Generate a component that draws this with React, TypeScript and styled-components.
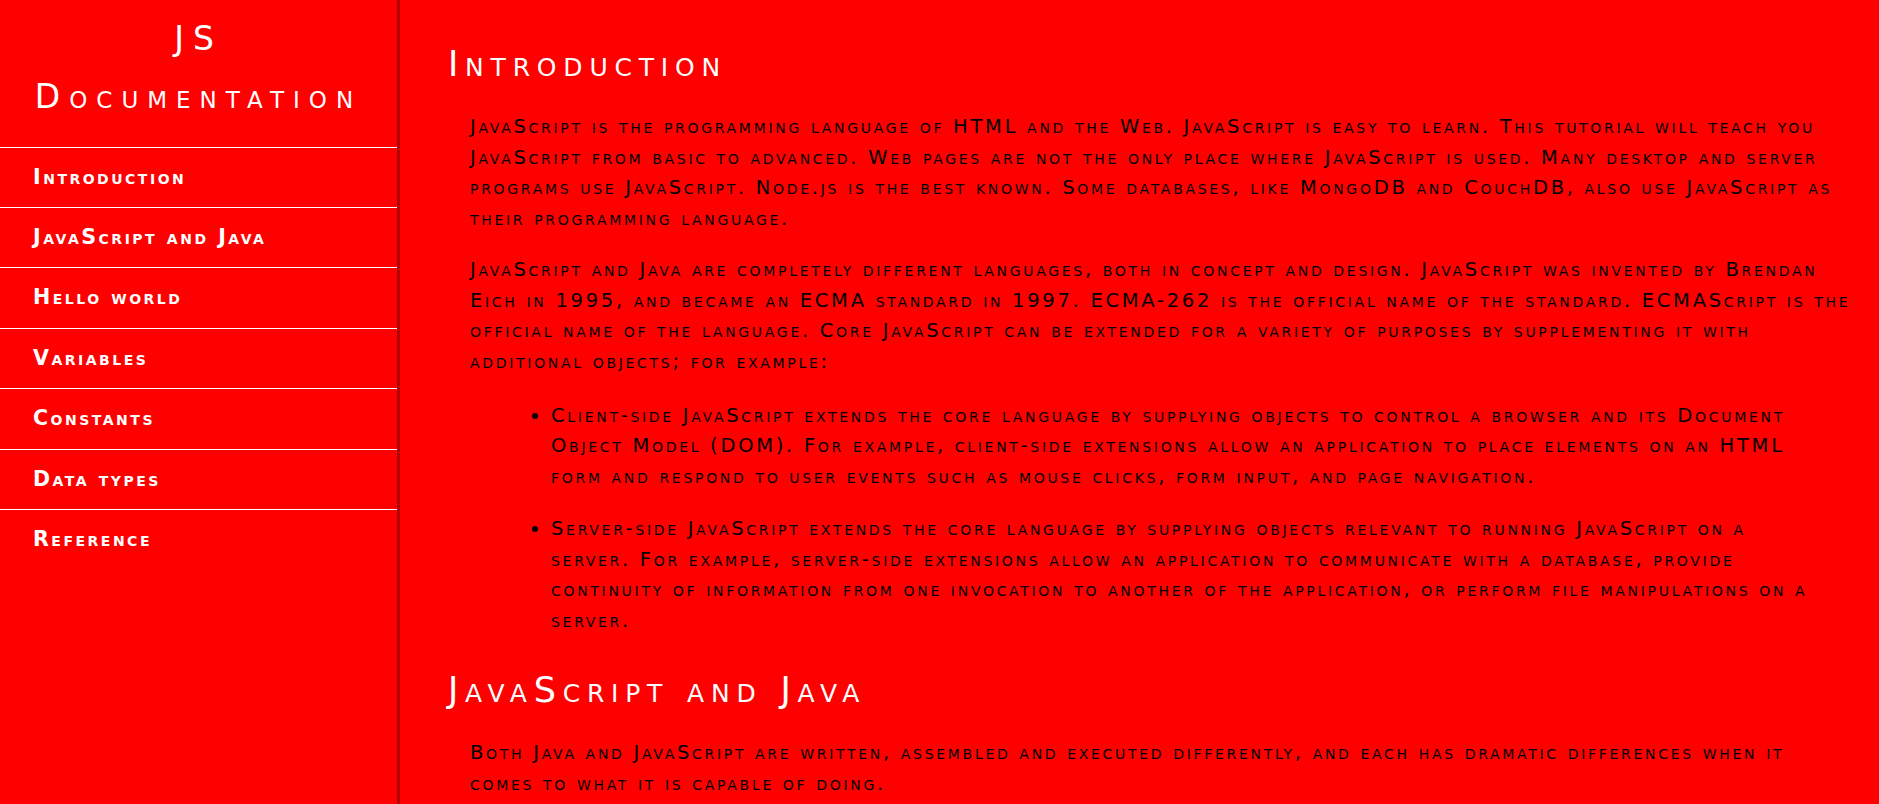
import React from "react";
import styled, { createGlobalStyle } from "styled-components";

const GlobalStyle = createGlobalStyle`
  * { box-sizing: border-box; }
  html, body {
    margin: 0;
    padding: 0;
    background: #ff0000;
  }
  body {
    font-family: "DejaVu Sans", "Liberation Sans", sans-serif;
    font-variant: small-caps;
    color: #000000;
  }
`;

const Page = styled.div`
  display: flex;
  min-height: 100vh;
  background: #ff0000;
`;

const Sidebar = styled.nav`
  flex: 0 0 400px;
  border-right: 3px solid #b30000;
  display: flex;
  flex-direction: column;
`;

const Title = styled.h1`
  margin: 0;
  height: 146.5px;
  padding: 10px 20px 0;
  text-align: center;
  color: #ffffff;
  font-size: 33px;
  font-weight: normal;
  line-height: 58px;
  letter-spacing: 9px;
`;

const NavList = styled.ul`
  list-style: none;
  margin: 0;
  padding: 0;
`;

const NavItem = styled.li`
  border-top: 1px solid #ffffff;
`;

const NavLink = styled.a`
  display: block;
  padding-left: 33px;
  color: #ffffff;
  text-decoration: none;
  font-size: 20.6px;
  font-weight: bold;
  line-height: 59.4px;
  letter-spacing: 2.5px;
`;

const Main = styled.main`
  flex: 1;
  min-width: 0;
  padding: 11px 26px 0 48px;
  display: flex;
  flex-direction: column;
`;

const Section = styled.section`
  display: flex;
  flex-direction: column;
  padding-top: 33px;
`;

const Heading = styled.header`
  margin: 0 0 28px;
  color: #ffffff;
  font-size: 35px;
  line-height: 40px;
  letter-spacing: 6.8px;
`;

const Paragraph = styled.p`
  margin: 0 0 20px 22px;
  font-size: 19.55px;
  line-height: 30.72px;
  letter-spacing: 2.7px;
`;

const List = styled.ul`
  margin: 3px 27px 0 22px;
  padding-left: 81px;
  font-size: 19.55px;
  line-height: 30.72px;
  letter-spacing: 2.7px;
`;

const ListItem = styled.li`
  & + & {
    margin-top: 21px;
  }
`;

type Topic = {
  id: string;
  title: string;
  paragraphs: string[];
  items?: string[];
};

const navTopics: { id: string; title: string }[] = [
  { id: "Introduction", title: "Introduction" },
  { id: "JavaScript_and_Java", title: "JavaScript and Java" },
  { id: "Hello_world", title: "Hello world" },
  { id: "Variables", title: "Variables" },
  { id: "Constants", title: "Constants" },
  { id: "Data_types", title: "Data types" },
  { id: "Reference", title: "Reference" },
];

const sections: Topic[] = [
  {
    id: "Introduction",
    title: "Introduction",
    paragraphs: [
      "JavaScript is the programming language of HTML and the Web. JavaScript is easy to learn. This tutorial will teach you JavaScript from basic to advanced. Web pages are not the only place where JavaScript is used. Many desktop and server programs use JavaScript. Node.js is the best known. Some databases, like MongoDB and CouchDB, also use JavaScript as their programming language.",
      "JavaScript and Java are completely different languages, both in concept and design. JavaScript was invented by Brendan Eich in 1995, and became an ECMA standard in 1997. ECMA-262 is the official name of the standard. ECMAScript is the official name of the language. Core JavaScript can be extended for a variety of purposes by supplementing it with additional objects; for example:",
    ],
    items: [
      "Client-side JavaScript extends the core language by supplying objects to control a browser and its Document Object Model (DOM). For example, client-side extensions allow an application to place elements on an HTML form and respond to user events such as mouse clicks, form input, and page navigation.",
      "Server-side JavaScript extends the core language by supplying objects relevant to running JavaScript on a server. For example, server-side extensions allow an application to communicate with a database, provide continuity of information from one invocation to another of the application, or perform file manipulations on a server.",
    ],
  },
  {
    id: "JavaScript_and_Java",
    title: "JavaScript and Java",
    paragraphs: [
      "Both Java and JavaScript are written, assembled and executed differently, and each has dramatic differences when it comes to what it is capable of doing.",
    ],
  },
];

export default function App() {
  return (
    <>
      <GlobalStyle />
      <Page>
        <Sidebar id="navbar">
          <Title>JS Documentation</Title>
          <NavList>
            {navTopics.map((t) => (
              <NavItem key={t.id}>
                <NavLink className="nav-link" href={`#${t.id}`}>
                  {t.title}
                </NavLink>
              </NavItem>
            ))}
          </NavList>
        </Sidebar>
        <Main id="main-doc">
          {sections.map((t) => (
            <Section className="main-section" id={t.id} key={t.id}>
              <Heading>{t.title}</Heading>
              {t.paragraphs.map((p, i) => (
                <Paragraph key={i}>{p}</Paragraph>
              ))}
              {t.items && (
                <List>
                  {t.items.map((it, i) => (
                    <ListItem key={i}>{it}</ListItem>
                  ))}
                </List>
              )}
            </Section>
          ))}
        </Main>
      </Page>
    </>
  );
}
